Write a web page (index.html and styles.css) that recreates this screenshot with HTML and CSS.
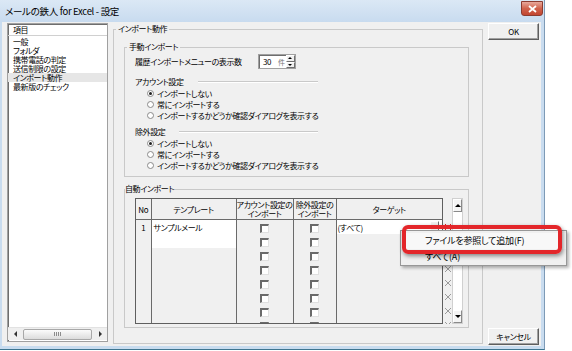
FILE: index.html
```html
<!DOCTYPE html>
<html lang="ja">
<head>
  <meta charset="UTF-8">
  <title>メールの鉄人 for Excel - 設定</title>
  <link rel="stylesheet" href="styles.css">
</head>
<body>
  <div class="window">
    <div class="titlebar">
      <span class="title">メールの鉄人 for Excel - 設定</span>
      <span class="close">
        <svg width="9" height="8" viewBox="0 0 9 8"><path d="M1 1 L8 7 M8 1 L1 7" stroke="#fff" stroke-width="1.8"/></svg>
      </span>
    </div>

    <div class="client">
      <!-- category list -->
      <div class="listbox">
        <div class="list-head">項目</div>
        <div class="list-item">一般</div>
        <div class="list-item">フォルダ</div>
        <div class="list-item">携帯電話の判定</div>
        <div class="list-item">送信制限の設定</div>
        <div class="list-item selected">インポート動作</div>
        <div class="list-item">最新版のチェック</div>
        <div class="hscroll">
          <span class="arrow-left"></span>
          <span class="hthumb"><span class="grip"></span></span>
          <span class="arrow-right"></span>
        </div>
      </div>

      <!-- settings page -->
      <fieldset class="group main">
        <legend>インポート動作</legend>

        <fieldset class="group manual">
          <legend>手動インポート</legend>
          <div class="spin-row">
            <span class="spin-label">履歴インポートメニューの表示数</span>
            <span class="spinner">
              <span class="spin-value">30</span>
              <span class="spin-unit">件</span>
              <span class="spin-buttons">
                <span class="spin-up"></span>
                <span class="spin-down"></span>
              </span>
            </span>
          </div>

          <div class="section-head">アカウント設定</div>
          <div class="radios">
            <div class="radio checked"><span class="dot"></span>インポートしない</div>
            <div class="radio"><span class="dot"></span>常にインポートする</div>
            <div class="radio"><span class="dot"></span>インポートするかどうか確認ダイアログを表示する</div>
          </div>

          <div class="section-head second">除外設定</div>
          <div class="radios">
            <div class="radio checked"><span class="dot"></span>インポートしない</div>
            <div class="radio"><span class="dot"></span>常にインポートする</div>
            <div class="radio"><span class="dot"></span>インポートするかどうか確認ダイアログを表示する</div>
          </div>
        </fieldset>

        <fieldset class="group auto">
          <legend>自動インポート</legend>
          <div class="grid-area">
            <div class="grid">
              <table>
                <colgroup>
                  <col style="width:15px">
                  <col style="width:85px">
                  <col style="width:57px">
                  <col style="width:43px">
                  <col>
                </colgroup>
                <thead>
                  <tr>
                    <th>No</th>
                    <th>テンプレート</th>
                    <th>アカウント設定の<br>インポート</th>
                    <th>除外設定の<br>インポート</th>
                    <th>ターゲット</th>
                  </tr>
                </thead>
                <tbody id="rows"></tbody>
              </table>
            </div>
            <div class="xcol" id="xcol"></div>
            <div class="vscroll">
              <span class="vbtn"><span class="arrow-up"></span></span>
              <span class="vbtn"><span class="arrow-down"></span></span>
            </div>
          </div>
        </fieldset>
      </fieldset>

      <div class="buttons">
        <button class="btn">OK</button>
        <button class="btn">キャンセル</button>
      </div>
    </div>

    <!-- context menu over the grid -->
    <div class="menu">
      <div class="menu-item hot">ファイルを参照して追加(F)</div>
      <div class="menu-item">すべて(A)</div>
    </div>
    <div class="callout"></div>
  </div>

  <script>
    // grid rows: only the first one has data, the second is the new-row line
    const rows = [
      { no: '1', template: 'サンプルメール', target: '(すべて)' },
      { no: '', template: '', target: null, fresh: true }
    ];
    for (let i = 0; i < 6; i++) rows.push({ no: '', template: '', target: null });

    const tbody = document.getElementById('rows');
    const xcol = document.getElementById('xcol');

    rows.forEach((row, i) => {
      const tr = document.createElement('tr');
      const tplClass = row.no || row.fresh ? 'cell-edit' : '';
      let target = '<td></td>';
      if (row.target) {
        target = `<td class="cell-edit target">${row.target}<span class="drop"></span></td>`;
      }
      tr.innerHTML = `
        <td class="no">${row.no}</td>
        <td class="${tplClass}">${row.template}</td>
        <td class="check"><span class="box"></span></td>
        <td class="check"><span class="box"></span></td>
        ${target}`;
      tbody.appendChild(tr);

      const x = document.createElement('div');
      x.className = 'xmark';
      const color = i === 0 ? '#d82020' : '#9a9a9a';
      x.innerHTML = `<svg width="8" height="8" viewBox="0 0 8 8"><path d="M1 1 L7 7 M7 1 L1 7" stroke="${color}" stroke-width="1"/></svg>`;
      xcol.appendChild(x);
    });
  </script>
</body>
</html>
```

FILE: styles.css
```css
body {
  margin: 0;
  background: #fff;
  font-family: "Noto Sans CJK JP", "Noto Sans", sans-serif;
  font-size: 8px;
  letter-spacing: -0.4px;
  font-feature-settings: "palt";
  color: #000;
}
.window {
  position: relative;
  width: 545px;
  height: 350px;
  box-sizing: border-box;
  background: #c9dcef;
  border-right: 1px solid #7d9ab6;
  border-bottom: 1px solid #3d7590;
  display: flex;
  flex-direction: column;
}
.titlebar {
  height: 22px;
  flex: none;
  display: flex;
  align-items: center;
  justify-content: space-between;
  padding-left: 5px;
  background: linear-gradient(#dbe8f5, #c8dbef);
  font-size: 9.5px;
  letter-spacing: -0.3px;
}
.close {
  align-self: flex-start;
  margin-top: 1px;
  margin-right: 1px;
  width: 22px;
  height: 15px;
  box-sizing: border-box;
  border: 1px solid #8c3b30;
  border-radius: 0 0 3px 3px;
  background: linear-gradient(#e8a99c, #d0624c 50%, #c24530);
  display: flex;
  align-items: center;
  justify-content: center;
}
.client {
  flex: 1;
  margin: 0 3px 3px 2px;
  background: #f0f0f0;
  display: flex;
  align-items: flex-start;
}

/* left list */
.listbox {
  margin: 1px 0 0 5px;
  width: 101px;
  height: 319px;
  box-sizing: border-box;
  background: #fff;
  border: 1px solid #a0a0a0;
  box-shadow: inset 1px 1px 0 #6e6e6e;
  display: flex;
  flex-direction: column;
}
.list-head {
  line-height: 10px;
  padding: 1px 0 0 5px;
  border-bottom: 1px solid #d0d0d0;
  margin-bottom: 1px;
}
.list-item {
  line-height: 9px;
  height: 9px;
  padding-left: 5px;
  white-space: nowrap;
}
.list-item.selected {
  background: #e6e6e6;
}
.hscroll {
  margin-top: auto;
  margin-bottom: 1px;
  height: 12px;
  display: flex;
  align-items: center;
  background: #efefef;
  border-top: 1px solid #e2e2e2;
}
.arrow-left, .arrow-right {
  width: 0;
  height: 0;
  border-top: 3px solid transparent;
  border-bottom: 3px solid transparent;
}
.arrow-left {
  border-right: 3px solid #333;
  margin: 0 6px 0 6px;
}
.arrow-right {
  border-left: 3px solid #333;
  margin: 0 5px 0 7px;
}
.hthumb {
  flex: 1;
  height: 9px;
  border: 1px solid #a8a8a8;
  border-radius: 2px;
  background: linear-gradient(#fbfbfb, #dcdcdc);
  display: flex;
  align-items: center;
  justify-content: center;
}
.grip {
  width: 7px;
  height: 4px;
  background: repeating-linear-gradient(90deg, #8c8c8c 0 1px, transparent 1px 2px);
}

/* group boxes */
.group {
  margin: 0;
  border: 1px solid #c9c9c9;
  box-sizing: border-box;
  min-width: 0;
}
.group legend {
  padding: 0 2px;
  line-height: 10px;
}
.main {
  margin: 2px 0 0 5px;
  width: 370px;
  height: 320px;
  padding: 0 13px 0 2px;
}
.manual {
  margin: 8px 0 0 8px;
  padding: 0 0 5px 2px;
}
.manual > div {
  margin-left: 8px;
}
.spin-row {
  margin-top: 2px;
  height: 15px;
  display: flex;
  align-items: center;
}
.spin-label {
  width: 123px;
  white-space: nowrap;
}
.spinner {
  width: 38px;
  height: 15px;
  box-sizing: border-box;
  background: #fff;
  border: 1px solid #a0a0a0;
  box-shadow: inset 1px 1px 0 #6e6e6e;
  display: flex;
  align-items: center;
}
.spin-value {
  margin-left: 4px;
  font-size: 8px;
}
.spin-unit {
  margin-left: 7px;
  font-size: 7px;
  color: #777;
}
.spin-buttons {
  margin-left: auto;
  width: 9px;
  height: 13px;
  display: flex;
  flex-direction: column;
}
.spin-up, .spin-down {
  flex: 1;
  background: #f0f0f0;
  border: 1px solid;
  border-color: #fff #707070 #707070 #fff;
  position: relative;
}
.spin-up::after, .spin-down::after {
  content: "";
  position: absolute;
  left: 1px;
  top: 1px;
  border-left: 2px solid transparent;
  border-right: 2px solid transparent;
}
.spin-up::after { border-bottom: 2px solid #000; }
.spin-down::after { border-top: 2px solid #000; }

.section-head {
  margin-top: 8px;
  width: 183px;
  height: 10px;
  line-height: 10px;
  display: flex;
  align-items: center;
}
.section-head::after {
  content: "";
  flex: 1;
  margin-left: 14px;
  border-top: 1px solid #c9c9c9;
  border-bottom: 1px solid #fff;
}
.section-head.second {
  margin-top: 6px;
}
.radios {
  margin-top: 1px;
}
.radio {
  height: 11px;
  line-height: 11px;
  padding-left: 12px;
  display: flex;
  align-items: center;
  white-space: nowrap;
}
.radio .dot {
  width: 7px;
  height: 7px;
  box-sizing: border-box;
  border-radius: 50%;
  border: 1px solid #8a8a8a;
  background: #fff;
  margin-right: 3px;
  display: flex;
  align-items: center;
  justify-content: center;
}
.radio.checked .dot::after {
  content: "";
  width: 3px;
  height: 3px;
  border-radius: 50%;
  background: #222;
}

.auto {
  margin: 7px 0 0 8px;
  padding: 0 0 3px 0;
}
.auto legend {
  padding: 0;
}

/* grid */
.grid-area {
  margin: 4px 0 0 10px;
  width: 328px;
  height: 126px;
  display: flex;
}
.grid {
  width: 308px;
  box-sizing: border-box;
  border: 1px solid #5f5f5f;
  overflow: hidden;
  background: #f0f0f0;
}
table {
  width: 100%;
  table-layout: fixed;
  border-collapse: collapse;
}
th {
  height: 20px;
  padding: 0;
  font-weight: normal;
  line-height: 9px;
  border-right: 1px solid #6a6a6a;
  border-bottom: 1px solid #6a6a6a;
  white-space: nowrap;
  overflow: hidden;
}
td {
  height: 14px;
  padding: 0;
  border-right: 1px solid #6a6a6a;
  white-space: nowrap;
  overflow: hidden;
}
th:last-child, td:last-child {
  border-right: none;
}
td.no {
  text-align: center;
}
td.cell-edit {
  background: #fff;
  padding-left: 2px;
}
td.target {
  position: relative;
  padding-left: 1px;
}
.drop {
  position: absolute;
  right: 3px;
  top: 1px;
  width: 9px;
  height: 11px;
  box-sizing: border-box;
  background: #f0f0f0;
  border: 1px solid;
  border-color: #fff #707070 #707070 #fff;
}
td.check {
  text-align: center;
}
.box {
  display: inline-block;
  vertical-align: middle;
  width: 9px;
  height: 9px;
  box-sizing: border-box;
  background: #fff;
  border-top: 2px solid #6a6a6a;
  border-left: 2px solid #6a6a6a;
  border-right: 1px solid #e0e0e0;
  border-bottom: 1px solid #e0e0e0;
}
.xcol {
  width: 9px;
  padding-top: 22px;
  overflow: hidden;
}
.xmark {
  height: 14px;
  display: flex;
  align-items: center;
  justify-content: center;
}
.vscroll {
  width: 11px;
  box-sizing: border-box;
  background: #fff;
  border: 1px solid #d0d0d0;
  display: flex;
  flex-direction: column;
  justify-content: space-between;
}
.vbtn {
  height: 11px;
  display: flex;
  align-items: center;
  justify-content: center;
  background: #f4f4f4;
  border: 1px solid;
  border-color: #fff #8a8a8a #8a8a8a #fff;
}
.arrow-up, .arrow-down {
  border-left: 3px solid transparent;
  border-right: 3px solid transparent;
}
.arrow-up { border-bottom: 3px solid #000; }
.arrow-down { border-top: 3px solid #000; }

/* buttons */
.buttons {
  align-self: stretch;
  margin-left: 5px;
  width: 51px;
  padding: 1px 0 1px;
  display: flex;
  flex-direction: column;
  justify-content: space-between;
}
.btn {
  height: 17px;
  padding: 0;
  font-family: inherit;
  font-size: 8px;
  letter-spacing: -0.4px;
  font-feature-settings: "palt";
  background: #f0f0f0;
  border: 1px solid;
  border-color: #fff #5e5e5e #5e5e5e #fff;
  box-shadow: inset -1px -1px 0 #a0a0a0;
}

/* popup menu and highlight */
.menu {
  position: absolute;
  left: 400px;
  top: 230px;
  width: 167px;
  height: 36px;
  box-sizing: border-box;
  padding-top: 2px;
  background: #f0f0f0;
  border: 1px solid #979797;
  box-shadow: 2px 2px 3px rgba(0, 0, 0, 0.3);
  font-size: 9px;
  letter-spacing: -0.2px;
}
.menu-item {
  height: 16px;
  line-height: 16px;
  padding-left: 24px;
}
.menu-item.hot {
  background: #f8f8f8;
}
.callout {
  position: absolute;
  left: 402px;
  top: 225px;
  width: 160px;
  height: 29px;
  box-sizing: border-box;
  border: 4px solid #e3262a;
  border-radius: 6px;
  box-shadow: 1px 2px 4px rgba(0, 0, 0, 0.45);
}
```
